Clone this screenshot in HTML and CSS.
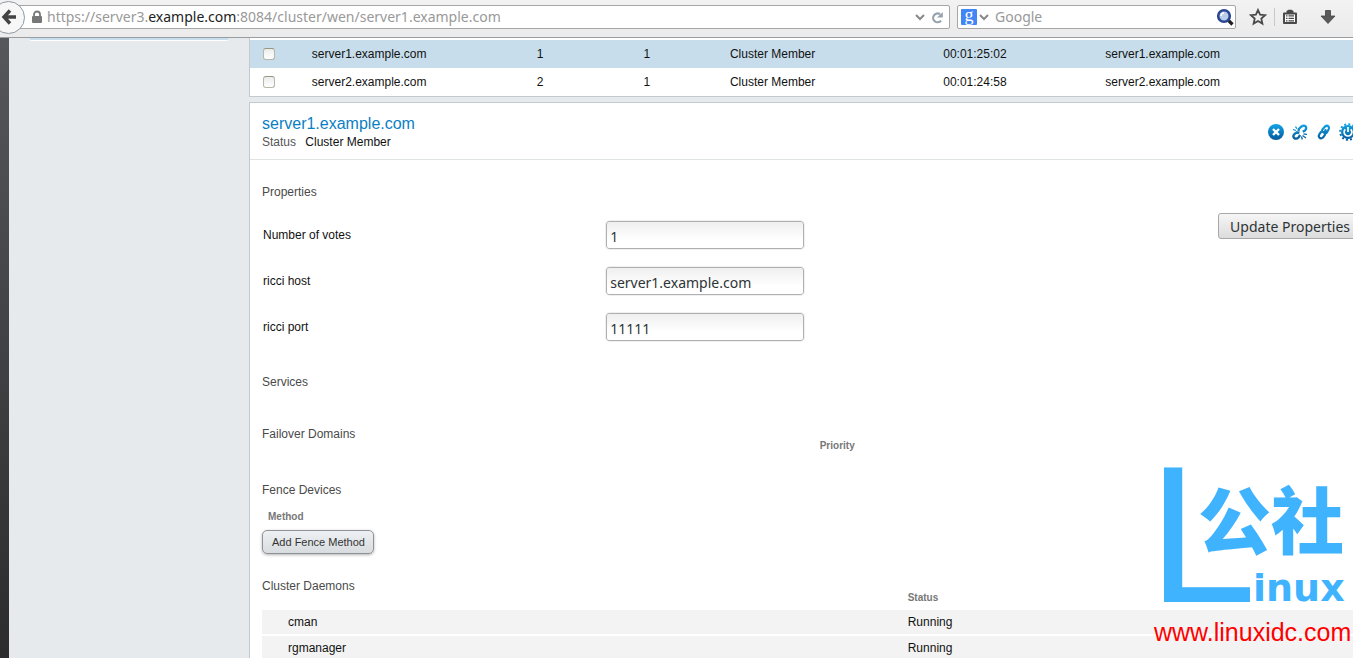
FILE: index.html
```html
<!DOCTYPE html>
<html lang="en">
<head>
    <meta charset="UTF-8">
    <meta name="viewport" content="width=device-width, initial-scale=1.0">
    <title>server1.example.com</title>
    <link rel="stylesheet" href="styles.css">
</head>
<body>
    <!-- Browser toolbar -->
    <header class="toolbar">
        <button type="button" class="back-btn" aria-label="Back">
            <svg width="16" height="16" viewBox="0 0 16 16"><path d="M9 1.500 3 8l6 6.500M4 8h11" fill="none" stroke="#444" stroke-width="3.400"/></svg>
        </button>
        <div class="url-bar">
            <svg width="12" height="14" viewBox="0 0 12 14"><path d="M3 7V4.500a3 3 0 0 1 6 0V7" fill="none" stroke="#777" stroke-width="1.800"/><rect x="1" y="6" width="10" height="7" rx="1" fill="#777"/></svg>
            <span class="url">https://server3.<b>example.com</b>:8084/cluster/wen/server1.example.com</span>
            <svg width="10" height="8" viewBox="0 0 10 8"><path d="m1 2 4 4 4-4" fill="none" stroke="#888" stroke-width="2"/></svg>
            <svg width="13" height="13" viewBox="0 0 13 13"><path d="M10 9.600A4.400 4.400 0 1 1 9 3.200" fill="none" stroke="#96a3af" stroke-width="2.200"/><path d="M11.800 1v5.500H6z" fill="#96a3af"/></svg>
        </div>
        <div class="search-bar">
            <span class="google">g</span>
            <svg width="10" height="8" viewBox="0 0 10 8"><path d="m1 2 4 4 4-4" fill="none" stroke="#888" stroke-width="2"/></svg>
            <input type="text" placeholder="Google" aria-label="Search">
            <svg width="18" height="18" viewBox="0 0 18 18"><path d="m12 12 4.500 4.500" stroke="#222" stroke-width="3.200"/><circle cx="8" cy="8" r="5.800" fill="#b9cdea" stroke="#2b4590" stroke-width="2.600"/><path d="M5 8a3 3 0 0 1 3-3" fill="none" stroke="#fff" stroke-width="1.500"/></svg>
        </div>
        <button type="button" class="tool-btn" aria-label="Bookmark">
            <svg width="18" height="18" viewBox="0 0 18 18"><path d="m9 2 2.100 4.700 5 .5-3.800 3.400 1.100 5L9 13l-4.400 2.600 1.100-5L1.900 7.200l5-.5z" fill="none" stroke="#4a4a4a" stroke-width="1.800"/></svg>
        </button>
        <span class="divider"></span>
        <button type="button" class="tool-btn" aria-label="Bookmarks list">
            <svg width="16" height="16" viewBox="0 0 16 16"><path d="M2 4.500h12V14H2z" fill="#fff" stroke="#4a4a4a" stroke-width="2" stroke-linejoin="round"/><path d="M4.500 4V2L6.500.8h3L11.500 2v2z" fill="#4a4a4a"/><path d="M4 6.800h1.500M4 9.300h1.500M4 11.800h1.500M6.500 6.800H12M6.500 9.300H12M6.500 11.800H12" stroke="#4a4a4a" stroke-width="1.300"/></svg>
        </button>
        <button type="button" class="tool-btn download" aria-label="Downloads">
            <svg width="16" height="16" viewBox="0 0 16 16"><path d="M5.500 1.500h5V7H15l-7 7.500L1 7h4.500z" fill="#5a5a5a" stroke="#444" stroke-width=".8"/></svg>
        </button>
    </header>

    <div class="page">
        <div class="edge"></div>
        <aside class="sidebar"><div class="selected-item"></div></aside>

        <main class="main">
            <table class="nodes">
                <tr class="selected">
                    <td class="check"><input type="checkbox" aria-label="Select server1"></td>
                    <td class="name">server1.example.com</td>
                    <td class="id">1</td>
                    <td class="votes">1</td>
                    <td class="status">Cluster Member</td>
                    <td class="uptime">00:01:25:02</td>
                    <td class="host">server1.example.com</td>
                </tr>
                <tr>
                    <td class="check"><input type="checkbox" aria-label="Select server2"></td>
                    <td class="name">server2.example.com</td>
                    <td class="id">2</td>
                    <td class="votes">1</td>
                    <td class="status">Cluster Member</td>
                    <td class="uptime">00:01:24:58</td>
                    <td class="host">server2.example.com</td>
                </tr>
            </table>

            <section class="details">
                <div class="details-head">
                    <div class="title">
                        <h1>server1.example.com</h1>
                        <p><span class="muted">Status</span> Cluster Member</p>
                    </div>
                    <div class="actions">
                        <svg width="0" height="0" class="defs">
                            <linearGradient id="blue" gradientUnits="userSpaceOnUse" x1="0" y1="0" x2="0" y2="16">
                                <stop offset="0" stop-color="#12a5e8"/>
                                <stop offset="1" stop-color="#065a9c"/>
                            </linearGradient>
                        </svg>
                        <button type="button" aria-label="Delete">
                            <svg width="16" height="16" viewBox="0 0 16 16"><circle cx="8" cy="8" r="8" fill="url(#blue)"/><path d="m5 5 6 6m0-6-6 6" stroke="#fff" stroke-width="2.400"/></svg>
                        </button>
                        <button type="button" aria-label="Leave cluster">
                            <svg width="16" height="16" viewBox="0 0 16 16"><g fill="none" stroke="url(#blue)" stroke-width="2.300"><path d="M6.500 7.500 6.800 5 9.500 2.500Q12 .7 13.800 2.500 14.800 4.800 13 6.500L10.800 7.800"/><path d="M7.200 9.200 5 8.200 2.500 10Q.500 12 2 14 4.500 15.500 6.500 13.500L8.200 11"/></g><path d="M1 5.500 4 6.500M3.500 2.500l1.300 2.300M11.500 10l3.500.3M10.500 11.500l3.500 2.500M9.500 12.500l.800 3" stroke="url(#blue)" stroke-width="1.300"/></svg>
                        </button>
                        <button type="button" aria-label="Join cluster">
                            <svg width="16" height="16" viewBox="0 0 16 16"><g fill="none" stroke="url(#blue)" stroke-width="2.200" stroke-linecap="round"><path d="M9.500 6Q9.200 8.500 7.500 8.300 5.500 7.500 6.500 5.300L9 2.500Q11 1 12.600 2.500 13.700 4.300 12.400 6L10.500 8.800"/><path d="M7.500 8.300Q9.800 8.500 9 10.800L7 13.500Q5 15.200 3.300 13.500 2.200 11.800 3.500 10L5 8"/></g></svg>
                        </button>
                        <button type="button" aria-label="Reboot">
                            <svg width="16" height="16" viewBox="0 0 16 16"><circle cx="8" cy="8" r="7" fill="url(#blue)"/><circle cx="8" cy="8" r="7.800" fill="none" stroke="url(#blue)" stroke-width="2" stroke-dasharray="2 2.084"/><path d="M5.300 5.300a3.900 3.900 0 1 0 5.400 0M8 3v5" fill="none" stroke="#fff" stroke-width="1.700"/></svg>
                        </button>
                    </div>
                </div>

                <form class="details-body" onsubmit="return false">
                    <h2>Properties</h2>
                    <div class="properties">
                        <div class="fields">
                            <label for="votes">Number of votes</label>
                            <input type="text" id="votes" value="1">
                            <label for="ricciHost">ricci host</label>
                            <input type="text" id="ricciHost" value="server1.example.com">
                            <label for="ricciPort">ricci port</label>
                            <input type="text" id="ricciPort" value="11111">
                        </div>
                        <button type="submit" class="update-btn">Update Properties</button>
                    </div>

                    <h2 class="services">Services</h2>

                    <h2 class="failover">Failover Domains</h2>
                    <table class="domains">
                        <tr><td></td><th>Priority</th></tr>
                    </table>

                    <h2 class="fence">Fence Devices</h2>
                    <h3>Method</h3>
                    <button type="button" class="fence-btn">Add Fence Method</button>

                    <h2 class="cluster">Cluster Daemons</h2>
                    <table class="daemons">
                        <thead>
                            <tr><td></td><th>Status</th></tr>
                        </thead>
                        <tbody>
                            <tr><td>cman</td><td>Running</td></tr>
                            <tr><td>rgmanager</td><td>Running</td></tr>
                        </tbody>
                    </table>
                </form>
            </section>
        </main>
    </div>

    <!-- Site watermark -->
    <svg class="watermark" width="200" height="198" viewBox="0 0 200 198">
        <g fill="#40b3ff">
            <text class="mark-l" x="-5" y="142">L</text>
            <text class="mark-cjk" x="45" y="88">公社</text>
            <text class="mark-inux" x="100" y="141">inux</text>
        </g>
        <text class="mark-url" x="1" y="181">www.linuxidc.com</text>
    </svg>
</body>
</html>
```
FILE: styles.css
```css
* {
    box-sizing: border-box;
}

body {
    margin: 0;
    height: 100vh;
    display: flex;
    flex-direction: column;
    overflow: hidden;
    position: relative;
    font-family: "Liberation Sans", Arial, sans-serif;
    font-size: 12px;
    line-height: 12px;
    color: #111;
    background-color: #e6eaed;
}

h1, h2, h3, p {
    margin: 0;
    font-weight: normal;
}

button {
    cursor: pointer;
}

svg {
    display: block;
    flex: none;
}

/* Browser toolbar */
.toolbar {
    flex: none;
    display: flex;
    align-items: center;
    height: 38px;
    padding: 0 13px 3px 0;
    background: linear-gradient(#f2f2f2, #ebebeb);
    border-bottom: 1px solid #989da1;
    font-family: "Noto Sans", sans-serif;
    font-size: 14px;
    line-height: 20px;
    color: #999;
}

.back-btn {
    flex: none;
    display: flex;
    align-items: center;
    justify-content: flex-end;
    width: 33px;
    height: 33px;
    margin-left: -8px;
    padding: 0 7px 0 0;
    border: 1px solid #8d99a5;
    border-radius: 50%;
    background: #f7f7f7;
    z-index: 1;
}

.url-bar, .search-bar {
    display: flex;
    align-items: center;
    height: 24px;
    background: #fff;
    border: 1px solid #a6a6a6;
    border-radius: 2px;
}

.url-bar {
    flex: 1;
    gap: 6px;
    margin-left: -8px;
    padding: 0 5px 0 13px;
}

.url {
    flex: 1;
    margin-left: -2px;
    white-space: nowrap;
}

.url b {
    font-weight: normal;
    color: #222;
}

.search-bar {
    width: 279px;
    margin: 0 13px 0 7px;
    padding: 0 1px 0 3px;
    gap: 2px;
}

.google {
    width: 16px;
    height: 16px;
    border-radius: 1px;
    background: #4285f4;
    color: #fff;
    font-family: "Liberation Serif", serif;
    font-size: 18px;
    line-height: 12px;
    text-align: center;
}

.search-bar input {
    flex: 1;
    min-width: 0;
    padding: 0 4px;
    border: 0;
    outline: 0;
    background: none;
    font: inherit;
}

.search-bar input::placeholder {
    color: #999;
}

.tool-btn {
    padding: 0;
    border: 0;
    background: none;
}

.divider {
    width: 1px;
    height: 18px;
    margin: 0 7px;
    background: #c6cad0;
}

.download {
    margin: 0 4px 0 22px;
}

/* Page */
.page {
    flex: 1;
    min-height: 0;
    display: flex;
}

.edge {
    width: 9px;
    background: linear-gradient(#55575a, #2c2c2e);
}

.sidebar {
    width: 240px;
    padding: 0 20px;
}

.selected-item {
    height: 3px;
    background: #c9deed;
    border-bottom: 1px solid #fff;
    border-radius: 0 0 3px 3px;
}

/* the panels run on past the right side of the window */
.main {
    flex: 1;
    margin-right: -21px;
    display: flex;
    flex-direction: column;
    gap: 5px;
}

.nodes {
    width: 100%;
    table-layout: fixed;
    border-collapse: separate;
    border-spacing: 0;
    padding-top: 2px;
    background: #fff;
    border-left: 1px solid #c3cacf;
    border-bottom: 1px solid #c3cacf;
}

.nodes td {
    height: 28px;
    padding: 0;
    text-align: center;
}

.nodes .selected td {
    background: #c8ddeb;
}

.nodes .check {
    width: 5.5%;
    padding-left: 13px;
    text-align: left;
}

.nodes .name {
    width: 15.6%;
    text-align: left;
}

.nodes .id {
    width: 9.4%;
}

.nodes .votes {
    width: 9.6%;
}

.nodes .status {
    width: 12.8%;
}

.nodes .uptime {
    width: 23.2%;
}

.nodes .host {
    text-align: left;
}

.nodes input {
    appearance: none;
    display: block;
    width: 12px;
    height: 12px;
    margin: 0;
    border: 1px solid #b4b8a8;
    border-top-color: #94987f;
    border-radius: 3px;
    background: linear-gradient(#ececec, #fff);
}

.details {
    flex: 1;
    background: #fff;
    border-top: 1px solid #c3cacf;
    border-left: 1px solid #c3cacf;
}

.details-head {
    display: flex;
    justify-content: space-between;
    align-items: center;
    height: 57px;
    padding: 0 18px 0 12px;
    border-bottom: 1px solid #dfe3e4;
}

.title {
    padding-top: 2px;
}

h1 {
    font-size: 16px;
    line-height: 20px;
    color: #0a80c4;
}

.title p {
    line-height: 16px;
}

.muted {
    margin-right: 6px;
    color: #555;
}

.actions {
    display: flex;
    gap: 8px;
    margin-top: 2px;
}

.actions button {
    padding: 0;
    border: 0;
    background: none;
}

.actions svg {
    overflow: visible;
}

.defs {
    position: absolute;
}

.details-body {
    padding: 26px 12px 0;
}

h2 {
    font-size: 12px;
    line-height: 12px;
    color: #4a4a4a;
}

h3, th {
    font-size: 10px;
    line-height: 12px;
    font-weight: bold;
    color: #777;
    text-align: left;
}

.properties {
    display: flex;
    justify-content: space-between;
    align-items: flex-start;
    padding-top: 15px;
}

.fields {
    flex: 1;
    display: grid;
    grid-template-columns: 36% 198px;
    gap: 18px 0;
    align-items: center;
    padding-top: 8px;
}

.fields label {
    padding-left: 1px;
}

.fields input {
    height: 28px;
    padding: 2px 3px 0;
    border: 1px solid #b0b0b0;
    border-radius: 3px;
    outline: 1px solid #f0f0f0;
    background: linear-gradient(#efefef, #fff 70%);
    font: 14px "Noto Sans", sans-serif;
    color: #2e3436;
}

.update-btn {
    height: 26px;
    padding: 0 11px;
    border: 1px solid #a8a8a8;
    border-radius: 3px;
    background: linear-gradient(#f6f6f6, #dcdcdc);
    font: 14px "Noto Sans", sans-serif;
    color: #2e3436;
}

.services {
    margin-top: 35px;
}

.failover {
    margin-top: 40px;
}

.domains, .daemons {
    width: 100%;
    table-layout: fixed;
    border-spacing: 0;
}

.domains td, .domains th {
    padding: 0;
}

.domains td {
    width: 50.7%;
}

.fence {
    margin: 32px 0 15px;
}

h3 {
    padding-left: 6px;
}

.fence-btn {
    display: block;
    height: 24px;
    margin-top: 7px;
    padding: 0 8px 1px 9px;
    border: 1px solid #8f9296;
    border-radius: 5px;
    box-shadow: 0 1px 3px rgba(0, 0, 0, 0.3);
    background: linear-gradient(#eef1f3, #d8dcdf);
    font: 11px "Liberation Sans", Arial, sans-serif;
    color: #333;
}

.cluster {
    margin-top: 26px;
}

.daemons td, .daemons th {
    padding: 0 0 4px;
}

.daemons td:first-child {
    width: 58.7%;
    padding-left: 26px;
}

.daemons tbody td {
    height: 26px;
    padding-bottom: 0;
    background: #f3f3f3;
    border-top: 2px solid #fff;
}

/* Site watermark */
.watermark {
    position: absolute;
    right: 0;
    bottom: 0;
    overflow: visible;
    pointer-events: none;
}

.mark-l {
    font: 195px "Liberation Sans", Arial, sans-serif;
}

.mark-cjk {
    font: 900 73px "Noto Sans CJK SC", sans-serif;
}

.mark-inux {
    font: bold 38px "DejaVu Sans", sans-serif;
}

.mark-url {
    font: 25px "Liberation Sans", Arial, sans-serif;
    fill: #f00;
}
```
